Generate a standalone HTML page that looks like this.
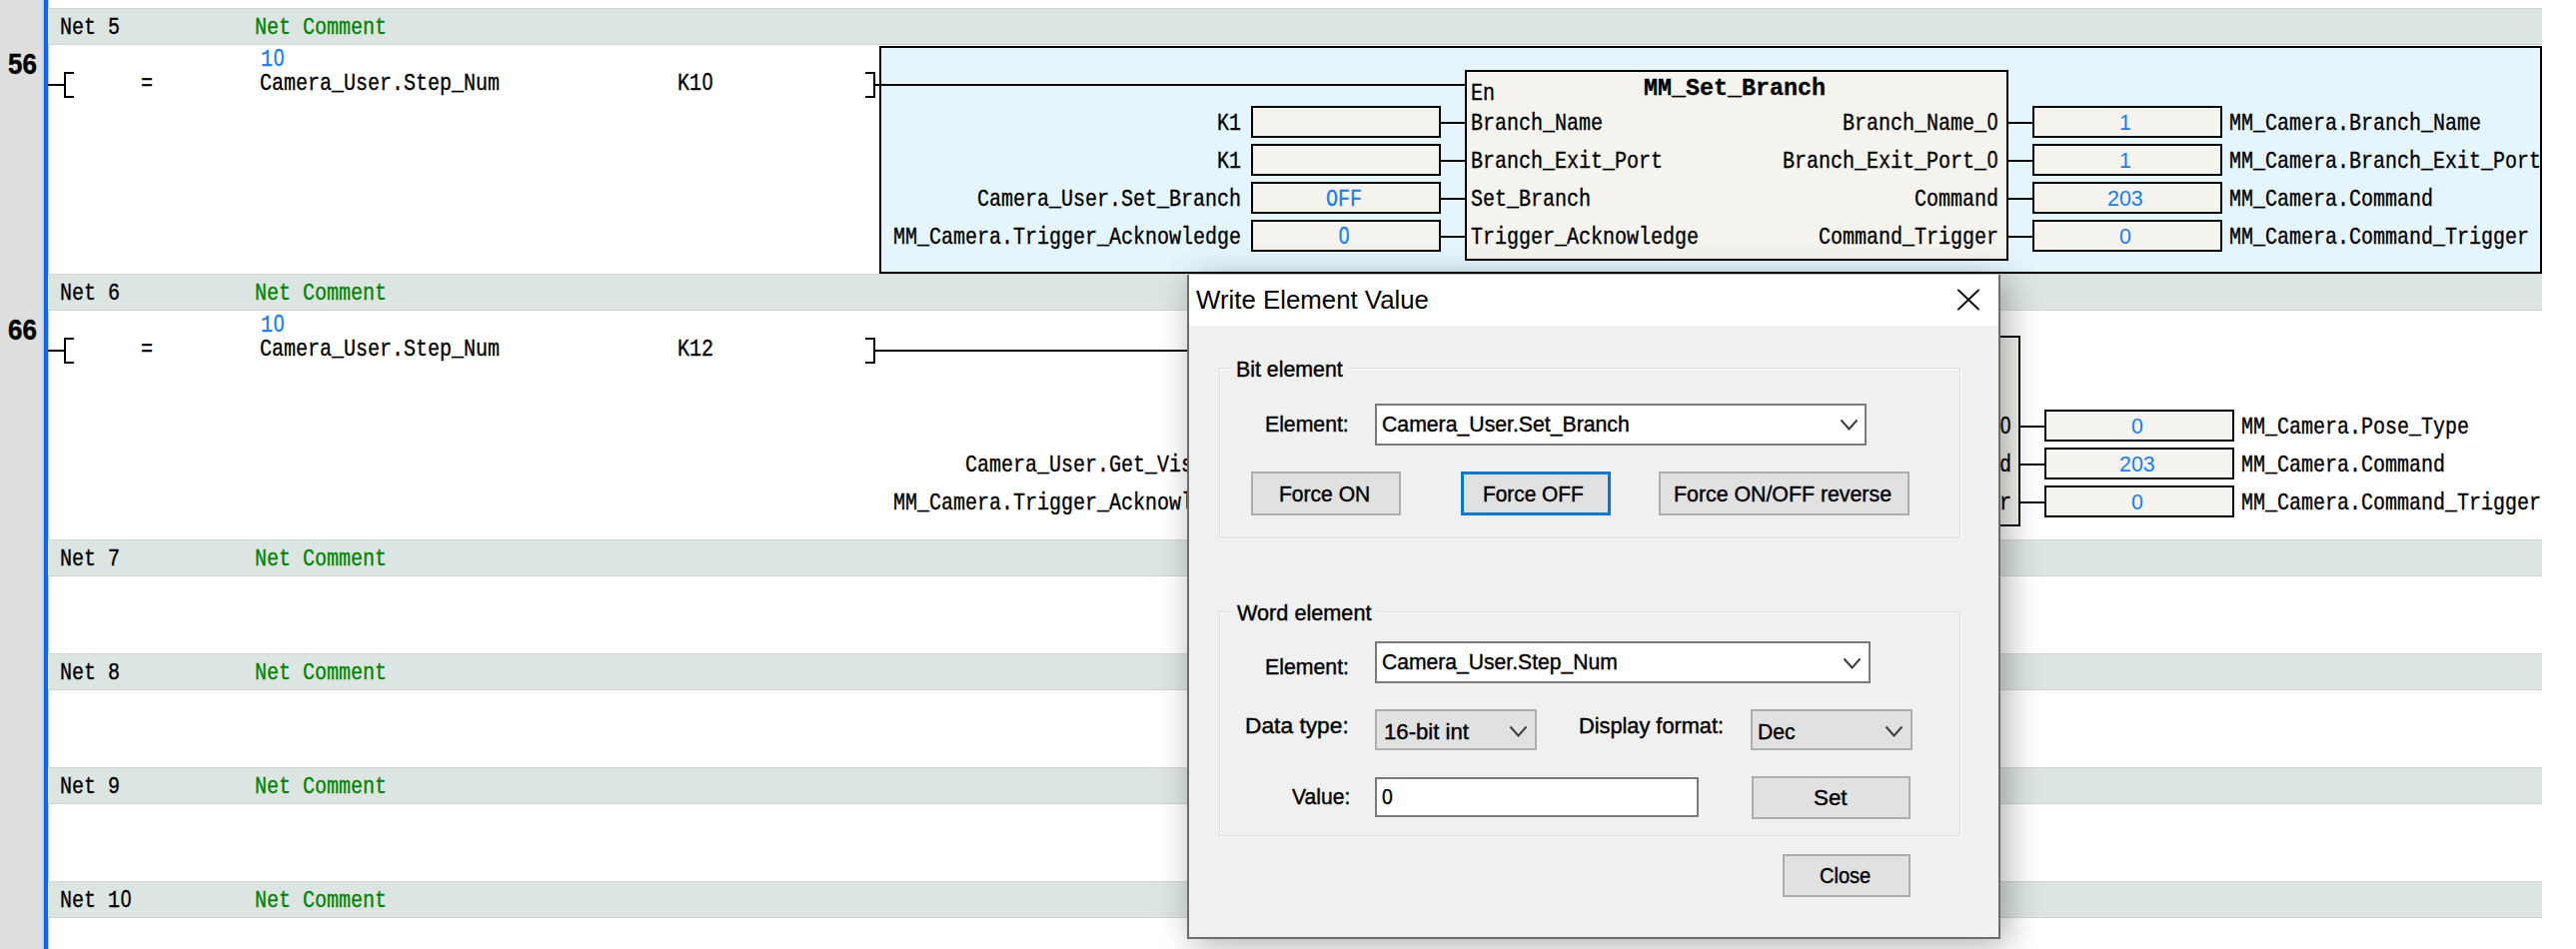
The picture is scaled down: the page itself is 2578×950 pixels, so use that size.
<!DOCTYPE html>
<html lang="en">
<head>
<meta charset="utf-8">
<title>Write Element Value</title>
<style>
html,body{margin:0;padding:0;background:#fff}
body{width:2578px;height:950px;position:relative;overflow:hidden;font-family:"Liberation Sans",sans-serif;color:#000}
div,span,svg{position:absolute;box-sizing:border-box}
#ladder{left:0;top:0;width:2578px;height:950px}
.m{font-family:"Liberation Mono",monospace;font-size:24px;line-height:24px;white-space:pre;transform-origin:0 0;display:block}
.m.b{font-weight:bold}
.m{-webkit-text-stroke:.35px currentColor}
.m i{font-style:normal;font-family:"Liberation Sans",sans-serif;font-size:23px;line-height:0;margin:0 .8px}
.m.b i{font-weight:bold}
.s{font-family:"Liberation Sans",sans-serif;white-space:pre;transform-origin:0 0;display:block}
.s.b{font-weight:bold}
.s{-webkit-text-stroke:.4px currentColor}
.s.v{-webkit-text-stroke:0}
.vb{width:190px;height:32px;background:#f4f3ee;border:2px solid #000}
#dlg{background:#f0f0f0;border:2px solid #6c6c6c;border-top:0;box-shadow:6px 5px 32px rgba(0,0,0,.33)}
.gb{border:1px solid #dcdcdc;box-shadow:1px 1px 0 #fff, inset 1px 1px 0 #fff}
.btn{background:#e1e1e1;border:2px solid #adadad}
.btn.f{border:3px solid #0078d7}
.ed{background:#fff;border:2px solid #7a7a7a}
.cb{background:#e1e1e1;border:2px solid #adadad}
</style>
</head>
<body>
<div id="ladder">
<div style="left:0px;top:0px;width:44px;height:950px;background:#dedede;"></div>
<div style="left:43px;top:0px;width:1px;height:950px;background:#9cbfe8;"></div>
<div style="left:44px;top:0px;width:4px;height:950px;background:#0468fb;"></div>
<div style="left:48px;top:0px;width:1px;height:950px;background:#a8cbf5;"></div>
<div style="left:48px;top:8px;width:2496px;height:37px;background:#dde5e3;border-top:1px solid #d3d6d5;border-bottom:1px solid #cfd3d2;"></div>
<span class="m" style="left:60px;top:15.6px;transform:scaleX(0.8332);">Net 5</span>
<span class="m" style="left:255px;top:15.6px;transform:scaleX(0.8332);color:#008400;">Net Comment</span>
<div style="left:48px;top:274px;width:2496px;height:37px;background:#dde5e3;border-top:1px solid #d3d6d5;border-bottom:1px solid #cfd3d2;"></div>
<span class="m" style="left:60px;top:281.6px;transform:scaleX(0.8332);">Net 6</span>
<span class="m" style="left:255px;top:281.6px;transform:scaleX(0.8332);color:#008400;">Net Comment</span>
<div style="left:48px;top:540px;width:2496px;height:37px;background:#dde5e3;border-top:1px solid #d3d6d5;border-bottom:1px solid #cfd3d2;"></div>
<span class="m" style="left:60px;top:547.6px;transform:scaleX(0.8332);">Net 7</span>
<span class="m" style="left:255px;top:547.6px;transform:scaleX(0.8332);color:#008400;">Net Comment</span>
<div style="left:48px;top:654px;width:2496px;height:37px;background:#dde5e3;border-top:1px solid #d3d6d5;border-bottom:1px solid #cfd3d2;"></div>
<span class="m" style="left:60px;top:661.6px;transform:scaleX(0.8332);">Net 8</span>
<span class="m" style="left:255px;top:661.6px;transform:scaleX(0.8332);color:#008400;">Net Comment</span>
<div style="left:48px;top:768px;width:2496px;height:37px;background:#dde5e3;border-top:1px solid #d3d6d5;border-bottom:1px solid #cfd3d2;"></div>
<span class="m" style="left:60px;top:775.6px;transform:scaleX(0.8332);">Net 9</span>
<span class="m" style="left:255px;top:775.6px;transform:scaleX(0.8332);color:#008400;">Net Comment</span>
<div style="left:48px;top:882px;width:2496px;height:37px;background:#dde5e3;border-top:1px solid #d3d6d5;border-bottom:1px solid #cfd3d2;"></div>
<span class="m" style="left:60px;top:889.6px;transform:scaleX(0.8332);">Net 1<i>0</i></span>
<span class="m" style="left:255px;top:889.6px;transform:scaleX(0.8332);color:#008400;">Net Comment</span>
<div style="left:880px;top:46px;width:1664px;height:228px;background:#e5f5fe;border:2px solid #000"></div>
<span class="s b" style="left:7.50px;top:50.45px;font-size:29px;line-height:29px;transform:scaleX(0.8931);">56</span>
<div style="left:48px;top:84px;width:16px;height:2px;background:#000;"></div>
<div style="left:64px;top:72px;width:2px;height:26px;background:#000;"></div>
<div style="left:64px;top:72px;width:10px;height:2px;background:#000;"></div>
<div style="left:64px;top:96px;width:10px;height:2px;background:#000;"></div>
<span class="m" style="left:141px;top:71.6px;transform:scaleX(0.8332);">=</span>
<span class="m" style="left:261px;top:47.6px;transform:scaleX(0.8332);color:#147ff4;">1<i>0</i></span>
<span class="m" style="left:260px;top:71.6px;transform:scaleX(0.8332);">Camera_User.Step_Num</span>
<span class="m" style="left:677.5px;top:71.6px;transform:scaleX(0.8332);">K1<i>0</i></span>
<div style="left:874px;top:72px;width:2px;height:26px;background:#000;"></div>
<div style="left:866px;top:72px;width:10px;height:2px;background:#000;"></div>
<div style="left:866px;top:96px;width:10px;height:2px;background:#000;"></div>
<div style="left:876px;top:84px;width:590px;height:2px;background:#000;"></div>
<div style="left:1466px;top:70px;width:544px;height:191px;background:#f4f3ee;border:2px solid #000"></div>
<span class="m" style="left:1472px;top:81.6px;transform:scaleX(0.8332);">En</span>
<span class="m b" style="left:1645px;top:77.1px;transform:scaleX(0.9721);">MM_Set_Branch</span>
<div class="vb" style="left:1252px;top:106px"></div>
<div style="left:1442px;top:122px;width:24px;height:2px;background:#000;"></div>
<span class="m" style="left:1472px;top:111.6px;transform:scaleX(0.8332);">Branch_Name</span>
<span class="m" style="left:1218px;top:111.6px;transform:scaleX(0.8332);">K1</span>
<span class="m" style="left:1844px;top:111.6px;transform:scaleX(0.8332);">Branch_Name_<i>0</i></span>
<div style="left:2010px;top:122px;width:24px;height:2px;background:#000;"></div>
<div class="vb" style="left:2034px;top:106px"></div>
<span class="s v" style="left:2121.1px;top:112.2px;font-size:22.5px;line-height:22.5px;transform:scaleX(0.9500);color:#147ff4;">1</span>
<span class="m" style="left:2231px;top:111.6px;transform:scaleX(0.8332);">MM_Camera.Branch_Name</span>
<div class="vb" style="left:1252px;top:144px"></div>
<div style="left:1442px;top:160px;width:24px;height:2px;background:#000;"></div>
<span class="m" style="left:1472px;top:149.6px;transform:scaleX(0.8332);">Branch_Exit_Port</span>
<span class="m" style="left:1218px;top:149.6px;transform:scaleX(0.8332);">K1</span>
<span class="m" style="left:1784px;top:149.6px;transform:scaleX(0.8332);">Branch_Exit_Port_<i>0</i></span>
<div style="left:2010px;top:160px;width:24px;height:2px;background:#000;"></div>
<div class="vb" style="left:2034px;top:144px"></div>
<span class="s v" style="left:2121.1px;top:150.2px;font-size:22.5px;line-height:22.5px;transform:scaleX(0.9500);color:#147ff4;">1</span>
<span class="m" style="left:2231px;top:149.6px;transform:scaleX(0.8332);">MM_Camera.Branch_Exit_Port</span>
<div class="vb" style="left:1252px;top:182px"></div>
<span class="m" style="left:1327px;top:187.6px;transform:scaleX(0.8332);color:#147ff4;">OFF</span>
<div style="left:1442px;top:198px;width:24px;height:2px;background:#000;"></div>
<span class="m" style="left:1472px;top:187.6px;transform:scaleX(0.8332);">Set_Branch</span>
<span class="m" style="left:978px;top:187.6px;transform:scaleX(0.8332);">Camera_User.Set_Branch</span>
<span class="m" style="left:1916px;top:187.6px;transform:scaleX(0.8332);">Command</span>
<div style="left:2010px;top:198px;width:24px;height:2px;background:#000;"></div>
<div class="vb" style="left:2034px;top:182px"></div>
<span class="s v" style="left:2109.2px;top:188.2px;font-size:22.5px;line-height:22.5px;transform:scaleX(0.9500);color:#147ff4;">203</span>
<span class="m" style="left:2231px;top:187.6px;transform:scaleX(0.8332);">MM_Camera.Command</span>
<div class="vb" style="left:1252px;top:220px"></div>
<span class="m" style="left:1339px;top:225.6px;transform:scaleX(0.8332);color:#147ff4;"><i>0</i></span>
<div style="left:1442px;top:236px;width:24px;height:2px;background:#000;"></div>
<span class="m" style="left:1472px;top:225.6px;transform:scaleX(0.8332);">Trigger_Acknowledge</span>
<span class="m" style="left:894px;top:225.6px;transform:scaleX(0.8332);">MM_Camera.Trigger_Acknowledge</span>
<span class="m" style="left:1820px;top:225.6px;transform:scaleX(0.8332);">Command_Trigger</span>
<div style="left:2010px;top:236px;width:24px;height:2px;background:#000;"></div>
<div class="vb" style="left:2034px;top:220px"></div>
<span class="s v" style="left:2121.1px;top:226.2px;font-size:22.5px;line-height:22.5px;transform:scaleX(0.9500);color:#147ff4;">0</span>
<span class="m" style="left:2231px;top:225.6px;transform:scaleX(0.8332);">MM_Camera.Command_Trigger</span>
<span class="s b" style="left:7.50px;top:316.45px;font-size:29px;line-height:29px;transform:scaleX(0.8931);">66</span>
<div style="left:48px;top:350px;width:16px;height:2px;background:#000;"></div>
<div style="left:64px;top:338px;width:2px;height:26px;background:#000;"></div>
<div style="left:64px;top:338px;width:10px;height:2px;background:#000;"></div>
<div style="left:64px;top:362px;width:10px;height:2px;background:#000;"></div>
<span class="m" style="left:141px;top:337.6px;transform:scaleX(0.8332);">=</span>
<span class="m" style="left:261px;top:313.6px;transform:scaleX(0.8332);color:#147ff4;">1<i>0</i></span>
<span class="m" style="left:260px;top:337.6px;transform:scaleX(0.8332);">Camera_User.Step_Num</span>
<span class="m" style="left:677.5px;top:337.6px;transform:scaleX(0.8332);">K12</span>
<div style="left:874px;top:338px;width:2px;height:26px;background:#000;"></div>
<div style="left:866px;top:338px;width:10px;height:2px;background:#000;"></div>
<div style="left:866px;top:362px;width:10px;height:2px;background:#000;"></div>
<div style="left:876px;top:350px;width:330px;height:2px;background:#000;"></div>
<div style="left:1466px;top:336px;width:556px;height:191px;background:#f4f3ee;border:2px solid #000"></div>
<span class="m" style="left:966px;top:453.6px;transform:scaleX(0.8332);">Camera_User.Get_Vis</span>
<span class="m" style="left:894px;top:491.6px;transform:scaleX(0.8332);">MM_Camera.Trigger_Acknowledge</span>
<span class="m" style="left:1881px;top:415.6px;transform:scaleX(0.8332);">Pose_Type_<i>0</i></span>
<div style="left:2022px;top:426px;width:24px;height:2px;background:#000;"></div>
<div class="vb" style="left:2046px;top:410px"></div>
<span class="s v" style="left:2133.1px;top:416.2px;font-size:22.5px;line-height:22.5px;transform:scaleX(0.9500);color:#147ff4;">0</span>
<span class="m" style="left:2243px;top:415.6px;transform:scaleX(0.8332);">MM_Camera.Pose_Type</span>
<span class="m" style="left:1929px;top:453.6px;transform:scaleX(0.8332);">Command</span>
<div style="left:2022px;top:464px;width:24px;height:2px;background:#000;"></div>
<div class="vb" style="left:2046px;top:448px"></div>
<span class="s v" style="left:2121.2px;top:454.2px;font-size:22.5px;line-height:22.5px;transform:scaleX(0.9500);color:#147ff4;">203</span>
<span class="m" style="left:2243px;top:453.6px;transform:scaleX(0.8332);">MM_Camera.Command</span>
<span class="m" style="left:1833px;top:491.6px;transform:scaleX(0.8332);">Command_Trigger</span>
<div style="left:2022px;top:502px;width:24px;height:2px;background:#000;"></div>
<div class="vb" style="left:2046px;top:486px"></div>
<span class="s v" style="left:2133.1px;top:492.2px;font-size:22.5px;line-height:22.5px;transform:scaleX(0.9500);color:#147ff4;">0</span>
<span class="m" style="left:2243px;top:491.6px;transform:scaleX(0.8332);">MM_Camera.Command_Trigger</span>
</div>
<div id="dialog" role="dialog" aria-label="Write Element Value" style="left:0;top:0">
<div id="dlg" style="left:1188px;top:275px;width:814px;height:665px"></div>
<div style="left:1190px;top:275px;width:810px;height:51px;background:#fff;"></div>
<span class="s v" style="left:1196.50px;top:286.57px;font-size:26.5px;line-height:26.5px;transform:scaleX(0.9744);">Write Element Value</span>
<svg style="left:1958px;top:289px" width="24" height="22" viewBox="0 0 24 22"><path d="M2 1.5 L22 20.5 M22 1.5 L2 20.5" stroke="#111" stroke-width="2" stroke-linecap="round" fill="none"/></svg>
<div class="gb" style="left:1220px;top:368px;width:742px;height:171px"></div>
<div style="left:1231px;top:366px;width:118.75px;height:6px;background:#f0f0f0;"></div>
<span class="s" style="left:1237.00px;top:360.30px;font-size:21.5px;line-height:21.5px;transform:scaleX(0.9926);">Bit element</span>
<div class="gb" style="left:1220px;top:612px;width:742px;height:225px"></div>
<div style="left:1231.5px;top:610px;width:146.5px;height:6px;background:#f0f0f0;"></div>
<span class="s" style="left:1237.50px;top:604.05px;font-size:21.5px;line-height:21.5px;transform:scaleX(1.0079);">Word element</span>
<span class="s" style="left:1266.25px;top:414.80px;font-size:21.5px;line-height:21.5px;transform:scaleX(0.9872);">Element:</span>
<div class="ed" style="left:1376px;top:404px;width:492px;height:42px"></div>
<span class="s" style="left:1383.00px;top:414.80px;font-size:21.5px;line-height:21.5px;transform:scaleX(0.9873);">Camera_User.Set_Branch</span>
<svg style="left:1841px;top:419px" width="19" height="12.5" viewBox="-1 -1 19 12.5"><path d="M0.5 0.5 L8.5 9.5 L16.5 0.5" stroke="#3c3c3c" stroke-width="2" fill="none"/></svg>
<div class="btn" style="left:1252px;top:472px;width:150px;height:44px"></div>
<span class="s" style="left:1280.00px;top:484.80px;font-size:21.5px;line-height:21.5px;transform:scaleX(0.9793);">Force ON</span>
<div class="btn f" style="left:1462px;top:472px;width:150px;height:44px"></div>
<span class="s" style="left:1483.75px;top:484.80px;font-size:21.5px;line-height:21.5px;transform:scaleX(0.9694);">Force OFF</span>
<div class="btn" style="left:1660px;top:472px;width:251px;height:44px"></div>
<span class="s" style="left:1674.50px;top:484.80px;font-size:21.5px;line-height:21.5px;transform:scaleX(0.9917);">Force ON/OFF reverse</span>
<span class="s" style="left:1266.00px;top:657.80px;font-size:21.5px;line-height:21.5px;transform:scaleX(0.9901);">Element:</span>
<div class="ed" style="left:1376px;top:642px;width:496px;height:42px"></div>
<span class="s" style="left:1383.00px;top:652.80px;font-size:21.5px;line-height:21.5px;transform:scaleX(0.9816);">Camera_User.Step_Num</span>
<svg style="left:1844px;top:658px" width="19" height="12.5" viewBox="-1 -1 19 12.5"><path d="M0.5 0.5 L8.5 9.5 L16.5 0.5" stroke="#3c3c3c" stroke-width="2" fill="none"/></svg>
<span class="s" style="left:1246.25px;top:716.55px;font-size:21.5px;line-height:21.5px;transform:scaleX(1.0587);">Data type:</span>
<div class="cb" style="left:1376px;top:710px;width:162px;height:41px"></div>
<span class="s" style="left:1385.00px;top:722.80px;font-size:21.5px;line-height:21.5px;transform:scaleX(1.0309);">16-bit int</span>
<svg style="left:1510px;top:726px" width="19" height="12.5" viewBox="-1 -1 19 12.5"><path d="M0.5 0.5 L8.5 9.5 L16.5 0.5" stroke="#3c3c3c" stroke-width="2" fill="none"/></svg>
<span class="s" style="left:1580.00px;top:716.55px;font-size:21.5px;line-height:21.5px;transform:scaleX(1.0114);">Display format:</span>
<div class="cb" style="left:1752px;top:710px;width:162px;height:41px"></div>
<span class="s" style="left:1758.75px;top:722.80px;font-size:21.5px;line-height:21.5px;transform:scaleX(0.9810);">Dec</span>
<svg style="left:1886px;top:726px" width="19" height="12.5" viewBox="-1 -1 19 12.5"><path d="M0.5 0.5 L8.5 9.5 L16.5 0.5" stroke="#3c3c3c" stroke-width="2" fill="none"/></svg>
<span class="s" style="left:1293.00px;top:788.30px;font-size:21.5px;line-height:21.5px;transform:scaleX(0.9813);">Value:</span>
<div class="ed" style="left:1376px;top:778px;width:324px;height:40px"></div>
<span class="s" style="left:1383.00px;top:788.30px;font-size:21.5px;line-height:21.5px;transform:scaleX(0.8993);">0</span>
<div class="btn" style="left:1753px;top:777px;width:159px;height:43px"></div>
<span class="s" style="left:1814.50px;top:788.55px;font-size:21.5px;line-height:21.5px;transform:scaleX(1.0381);">Set</span>
<div class="btn" style="left:1784px;top:855px;width:128px;height:43px"></div>
<span class="s" style="left:1821.25px;top:866.55px;font-size:21.5px;line-height:21.5px;transform:scaleX(0.9322);">Close</span>
</div>
</body>
</html>
